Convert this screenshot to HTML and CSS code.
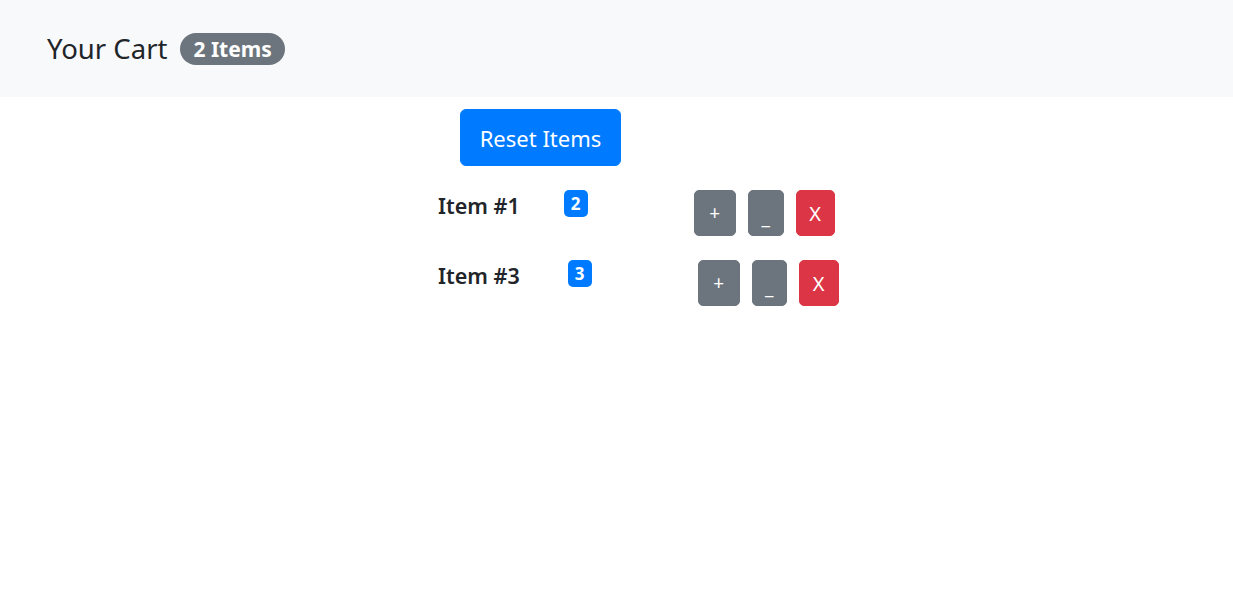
FILE: index.html
```html
<!DOCTYPE html>
<html>
<head>
<meta charset="utf-8">
<link rel="stylesheet" href="styles.css">
</head>
<body>
<nav class="navbar">
  <span class="brand">Your Cart</span>
  <span class="pill">2 Items</span>
</nav>
<main class="cart">
  <button class="btn btn-primary btn-reset">Reset Items</button>
  <div class="row">
    <span class="name">Item #1</span>
    <span class="count">2</span>
    <div class="actions">
      <button class="btn btn-secondary btn-sm btn-plus">+</button>
      <button class="btn btn-secondary btn-sm btn-minus">_</button>
      <button class="btn btn-danger btn-sm btn-x">X</button>
    </div>
  </div>
  <div class="row row-wide">
    <span class="name">Item #3</span>
    <span class="count">3</span>
    <div class="actions">
      <button class="btn btn-secondary btn-sm btn-plus">+</button>
      <button class="btn btn-secondary btn-sm btn-minus">_</button>
      <button class="btn btn-danger btn-sm btn-x">X</button>
    </div>
  </div>
</main>
</body>
</html>
```

FILE: styles.css
```css
* { box-sizing: border-box; }
body {
  margin: 0;
  font-family: "Noto Sans", "Open Sans", sans-serif;
  color: #212529;
  background: #fff;
}
.navbar {
  background: #f8f9fa;
  height: 97px;
  display: flex;
  align-items: center;
  padding-left: 47px;
}
.brand {
  font-size: 27.5px;
  line-height: 1;
  color: #212529;
}
.pill {
  margin-left: 13px;
  background: #6c757d;
  color: #fff;
  font-weight: 700;
  font-size: 21px;
  line-height: 32px;
  height: 32px;
  padding: 0 13px;
  border-radius: 16px;
}
.cart {
  padding-left: 438px;
  padding-top: 12px;
  display: flex;
  flex-direction: column;
  align-items: flex-start;
}
.btn {
  font-family: inherit;
  border: 1px solid transparent;
  color: #fff;
  cursor: pointer;
  padding: 0;
  display: flex;
  align-items: center;
  justify-content: center;
}
.btn-primary { background: #007bff; border-color: #007bff; }
.btn-secondary { background: #6c757d; border-color: #6c757d; }
.btn-danger { background: #dc3545; border-color: #dc3545; }
.btn-reset {
  margin-left: 22px;
  width: 161px;
  height: 57px;
  font-size: 22px;
  border-radius: 6px;
}
.row {
  display: flex;
  align-items: flex-start;
  margin-top: 24px;
}
.name {
  font-weight: 600;
  font-size: 21.5px;
  line-height: 32px;
}
.count {
  margin-left: 44px;
  background: #007bff;
  color: #fff;
  font-weight: 700;
  font-size: 17px;
  height: 27px;
  line-height: 27px;
  padding: 0 7px;
  border-radius: 5px;
  text-align: center;
  min-width: 24px;
}
.row-wide .count { margin-left: 48px; }
.actions {
  margin-left: 106px;
  display: flex;
  gap: 12px;
}
.btn-sm {
  height: 46px;
  border-radius: 5px;
  font-size: 19px;
}
.btn-plus { width: 42px; }
.btn-minus { width: 36px; padding-top: 8px; }
.btn-x { width: 39px; font-size: 20px; }
.row-wide .btn-minus { width: 35px; }
.row-wide .btn-x { width: 40px; }
```
